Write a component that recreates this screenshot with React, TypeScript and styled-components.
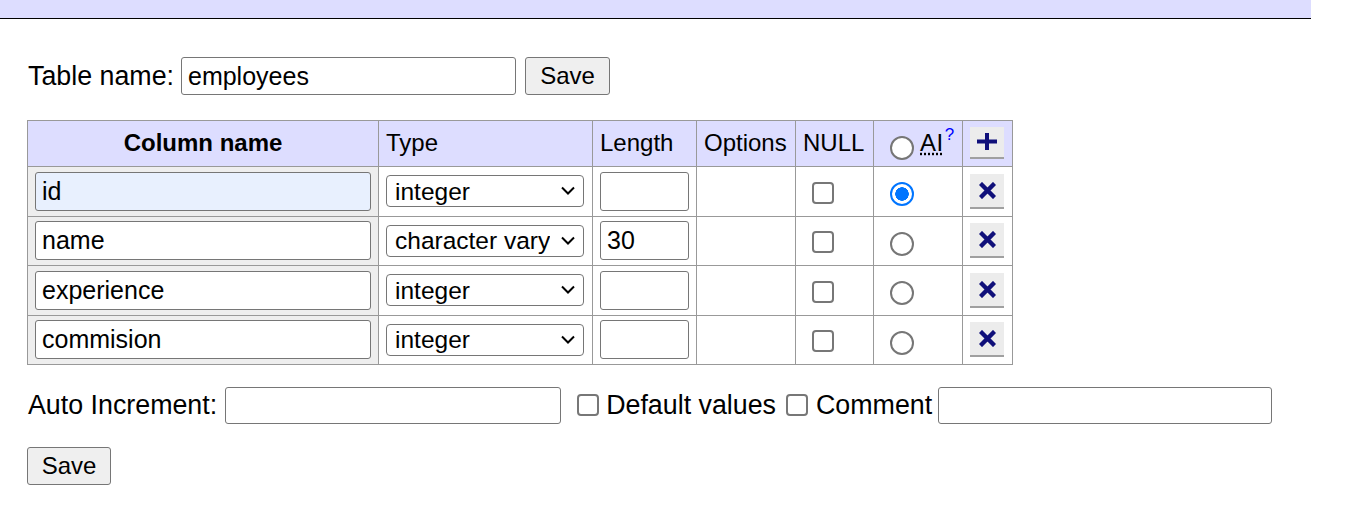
import React from "react";
import styled, { createGlobalStyle } from "styled-components";

const GlobalStyle = createGlobalStyle`
  html, body { margin: 0; padding: 0; background: #fff; }
  body {
    font-family: "Liberation Sans", Arial, Helvetica, sans-serif;
    font-size: 26.8px;
    color: #000;
  }
`;

const TopBar = styled.div`
  width: 1311px;
  height: 18px;
  background: #ddf;
  border-bottom: 1px solid #000;
`;

const Content = styled.div`
  display: flex;
  flex-direction: column;
  align-items: flex-start;
  padding: 38px 0 0 27px;
`;

const FormRow = styled.div<{ $mt?: number }>`
  display: flex;
  align-items: center;
  margin-top: ${(p) => p.$mt ?? 0}px;
  height: 38px;
`;

const Label = styled.label<{ $ml?: number; $mr?: number }>`
  margin-left: ${(p) => p.$ml ?? 0}px;
  margin-right: ${(p) => p.$mr ?? 0}px;
  white-space: nowrap;
  line-height: 1.15;
`;

const TextInput = styled.input<{ $w: number; $h?: number; $filled?: boolean }>`
  box-sizing: border-box;
  width: ${(p) => p.$w}px;
  height: ${(p) => p.$h ?? 38}px;
  margin: 0;
  padding: 0 6px;
  border: 1px solid #767676;
  border-radius: 3px;
  background: ${(p) => (p.$filled ? "#e8f0fe" : "#fff")};
  font-family: "Liberation Sans", Arial, sans-serif;
  font-size: 25px;
  color: #000;
  outline: none;
`;

const Button = styled.button<{ $w: number }>`
  box-sizing: border-box;
  width: ${(p) => p.$w}px;
  height: 38px;
  margin: 0 0 0 ${(p) => (p.$w === 85 ? 9 : 0)}px;
  padding: 0;
  border: 1px solid #767676;
  border-radius: 3px;
  background: #efefef;
  font-family: "Liberation Sans", Arial, sans-serif;
  font-size: 24px;
  color: #000;
`;

const BottomButton = styled(Button)`
  margin: 23px 0 0 0;
`;

const Grid = styled.table`
  margin-top: 25px;
  border-collapse: collapse;
  table-layout: fixed;
  width: 985px;
  font-size: 24px;
`;

const Col = styled.col<{ $w: number }>`
  width: ${(p) => p.$w}px;
`;

const HeadRow = styled.tr`
  height: 46px;
`;

const BodyRow = styled.tr`
  height: 49.5px;
`;

const HeadCell = styled.th<{ $center?: boolean; $bold?: boolean }>`
  background: #ddf;
  border: 1px solid #999;
  padding: 0 7px 2px 7px;
  text-align: ${(p) => (p.$center ? "center" : "left")};
  font-weight: ${(p) => (p.$bold ? "bold" : "normal")};
  vertical-align: middle;
  white-space: nowrap;
  line-height: 1.15;
`;

const NameCell = styled.th`
  background: #eee;
  border: 1px solid #999;
  padding: 0 7px;
  text-align: left;
  vertical-align: middle;
  font-weight: normal;
`;

const Cell = styled.td<{ $center?: boolean }>`
  border: 1px solid #999;
  padding: 0 7px;
  vertical-align: middle;
  text-align: ${(p) => (p.$center ? "center" : "left")};
  white-space: nowrap;
  line-height: 1;
`;

const SelectWrap = styled.span`
  position: relative;
  display: inline-block;
  vertical-align: middle;
`;

const Select = styled.select`
  box-sizing: border-box;
  appearance: none;
  -webkit-appearance: none;
  display: block;
  width: 198px;
  height: 32px;
  margin: 0;
  padding: 0 33px 0 8px;
  border: 1px solid #767676;
  border-radius: 4px;
  background: #fff;
  font-family: "Liberation Sans", Arial, sans-serif;
  font-size: 24.5px;
  color: #000;
  outline: none;
`;

const Chevron = styled.svg`
  position: absolute;
  right: 9px;
  top: 11px;
  pointer-events: none;
`;

const Check = styled.input.attrs({ type: "checkbox" })<{ $ml?: number; $mr?: number; $size?: number }>`
  appearance: none;
  -webkit-appearance: none;
  box-sizing: border-box;
  width: ${(p) => p.$size ?? 22}px;
  height: ${(p) => p.$size ?? 22}px;
  margin: 0 ${(p) => p.$mr ?? 0}px 0 ${(p) => p.$ml ?? 0}px;
  border: 2px solid #777;
  border-radius: 4px;
  background: #fff;
  vertical-align: middle;
  flex-shrink: 0;
`;

const Radio = styled.input.attrs({ type: "radio" })<{ $mt?: number }>`
  appearance: none;
  -webkit-appearance: none;
  box-sizing: border-box;
  width: 24px;
  height: 24px;
  margin: ${(p) => p.$mt ?? 0}px 0 0 9px;
  border: 2px solid #767676;
  border-radius: 50%;
  background: #fff;
  vertical-align: middle;
  &:checked {
    border-color: #0075ff;
    background: radial-gradient(circle, #0075ff 0 6.5px, #fff 7px);
  }
`;

const Abbr = styled.abbr`
  text-decoration: underline dotted;
  text-underline-offset: 3px;
  margin-left: 6px;
  letter-spacing: 0.5px;
`;

const Sup = styled.sup`
  font-size: 17px;
  color: #00f;
  vertical-align: 11px;
  margin-left: 1px;
`;

const IconButton = styled.button<{ $h: number }>`
  box-sizing: border-box;
  display: inline-flex;
  align-items: center;
  justify-content: center;
  width: 34px;
  height: ${(p) => p.$h}px;
  margin: 0;
  padding: 0;
  border: 0;
  border-bottom: 2px solid #a0a0a0;
  background: #ececec;
  vertical-align: middle;
`;

const Text = styled.span<{ $ml?: number; $mr?: number }>`
  margin-left: ${(p) => p.$ml ?? 0}px;
  margin-right: ${(p) => p.$mr ?? 0}px;
  white-space: nowrap;
  line-height: 1.15;
`;

const CrossIcon = () => (
  <svg width="17" height="17" viewBox="0 0 17 17">
    <path d="M3 3 L14 14 M14 3 L3 14" stroke="#10107a" strokeWidth="4.4" strokeLinecap="square" fill="none" />
  </svg>
);

const PlusIcon = () => (
  <svg width="20" height="17" viewBox="0 0 20 17">
    <path d="M0 8.5 H20 M10 0 V17" stroke="#10107a" strokeWidth="4" fill="none" />
  </svg>
);

const types: Record<string, string> = {
  integer: "integer",
  varchar: "character varying",
};

const rows = [
  { name: "id", type: "integer", length: "", ai: true, filled: true },
  { name: "name", type: "varchar", length: "30", ai: false },
  { name: "experience", type: "integer", length: "", ai: false },
  { name: "commision", type: "integer", length: "", ai: false },
];

export default function App() {
  return (
    <>
      <GlobalStyle />
      <TopBar />
      <Content>
        <FormRow>
          <Label $ml={1} $mr={7}>Table name:</Label>
          <TextInput $w={335} defaultValue="employees" />
          <Button $w={85}>Save</Button>
        </FormRow>

        <Grid>
          <colgroup>
            <Col $w={351} />
            <Col $w={214} />
            <Col $w={104} />
            <Col $w={99} />
            <Col $w={78} />
            <Col $w={89} />
            <Col $w={50} />
          </colgroup>
          <thead>
            <HeadRow>
              <HeadCell $center $bold>Column name</HeadCell>
              <HeadCell>Type</HeadCell>
              <HeadCell>Length</HeadCell>
              <HeadCell>Options</HeadCell>
              <HeadCell>NULL</HeadCell>
              <HeadCell>
                <Radio name="ai" $mt={8} />
                <Abbr title="Auto Increment">AI</Abbr>
                <Sup>?</Sup>
              </HeadCell>
              <HeadCell>
                <IconButton $h={32} title="Add next">
                  <PlusIcon />
                </IconButton>
              </HeadCell>
            </HeadRow>
          </thead>
          <tbody>
            {rows.map((r) => (
              <BodyRow key={r.name}>
                <NameCell>
                  <TextInput $w={336} $h={39} $filled={r.filled} defaultValue={r.name} />
                </NameCell>
                <Cell>
                  <SelectWrap>
                    <Select defaultValue={r.type}>
                      {Object.entries(types).map(([k, v]) => (
                        <option key={k} value={k}>{v}</option>
                      ))}
                    </Select>
                    <Chevron width="14" height="9" viewBox="0 0 14 9">
                      <path d="M1 1.5 L7 7.5 L13 1.5" stroke="#000" strokeWidth="2" fill="none" />
                    </Chevron>
                  </SelectWrap>
                </Cell>
                <Cell>
                  <TextInput $w={89} $h={39} defaultValue={r.length} />
                </Cell>
                <Cell />
                <Cell>
                  <Check $ml={9} />
                </Cell>
                <Cell>
                  <Radio name="ai" $mt={6} defaultChecked={r.ai} />
                </Cell>
                <Cell>
                  <IconButton $h={35} title="Remove">
                    <CrossIcon />
                  </IconButton>
                </Cell>
              </BodyRow>
            ))}
          </tbody>
        </Grid>

        <FormRow $mt={21}>
          <Label $ml={1} $mr={8}>Auto Increment:</Label>
          <TextInput $w={336} $h={37} />
          <Check $ml={16} $mr={7} />
          <Text $mr={10}>Default values</Text>
          <Check $mr={8} />
          <Text $mr={6}>Comment</Text>
          <TextInput $w={334} $h={37} />
        </FormRow>

        <BottomButton $w={84}>Save</BottomButton>
      </Content>
    </>
  );
}
